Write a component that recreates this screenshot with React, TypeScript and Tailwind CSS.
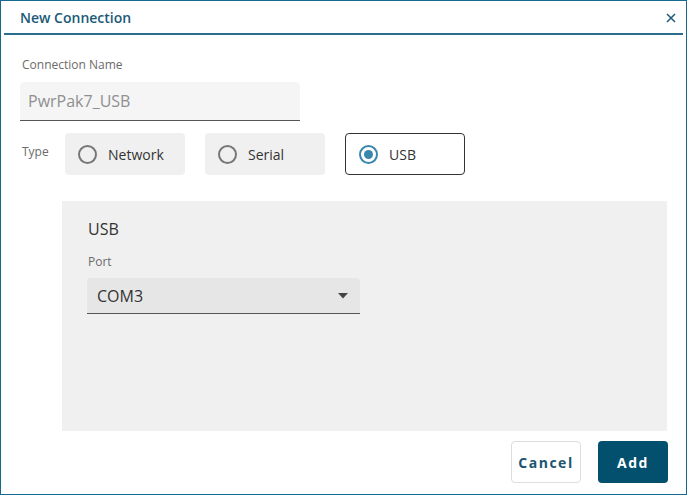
function Radio({ label, checked = false }: { label: string; checked?: boolean }) {
  return (
    <div
      className={[
        "flex h-[42px] w-[120px] items-center rounded-[4px] pl-[13px]",
        checked ? "border border-[#333] bg-white" : "bg-[#f0f0f0]",
      ].join(" ")}
    >
      <span
        className={[
          "flex h-[19px] w-[19px] items-center justify-center rounded-full border-2",
          checked ? "border-[#3a87ad]" : "border-[#777]",
        ].join(" ")}
      >
        {checked && <span className="h-[9px] w-[9px] rounded-full bg-[#3a87ad]" />}
      </span>
      <span className="ml-[11px] text-[14px] text-[#333]">{label}</span>
    </div>
  );
}

export default function App() {
  return (
    <div className="h-[495px] w-[688px] bg-white" style={{ fontFamily: '"Open Sans", sans-serif' }}>
      <div className="flex h-[495px] w-[687px] flex-col border border-[#16698f]">
        {/* header */}
        <div className="mx-[3px] flex h-[34px] items-center justify-between border-b-2 border-[#2a6d8c] pl-[16px] pr-[7px]">
          <h1 className="text-[14px] font-semibold text-[#1a5a78]">New Connection</h1>
          <svg width="10" height="10" viewBox="0 0 10 10" className="mt-[1px]">
            <path d="M1 1L9 9M9 1L1 9" stroke="#1a5a78" strokeWidth="1.5" />
          </svg>
        </div>

        <div className="pl-[21px] pt-[22px]">
          <div className="text-[12px] leading-[16px] text-[#6b6b6b]">Connection Name</div>
          <div className="ml-[-2px] mt-[9px] flex h-[39px] w-[280px] items-center rounded-t-[4px] border-b border-[#555] bg-[#f5f5f5] pl-[8px] text-[16px] text-[#8f8f8f]">
            PwrPak7_USB
          </div>

          <div className="mt-[12px] flex">
            <div className="w-[43px] pt-[10px] text-[12px] text-[#6b6b6b]">Type</div>
            <div className="flex gap-[20px]">
              <Radio label="Network" />
              <Radio label="Serial" />
              <Radio label="USB" checked />
            </div>
          </div>

          <div className="ml-[40px] mt-[26px] h-[230px] w-[605px] bg-[#f0f0f0] pl-[26px] pt-[17px]">
            <div className="text-[16px] leading-[22px] text-[#333]">USB</div>
            <div className="mt-[14px] text-[12px] leading-[16px] text-[#6b6b6b]">Port</div>
            <div className="ml-[-1px] mt-[8px] flex h-[36px] w-[273px] items-center justify-between rounded-t-[4px] border-b border-[#555] bg-[#e6e6e6] pl-[10px] pr-[12px]">
              <span className="text-[16px] text-[#333]">COM3</span>
              <svg width="10" height="6" viewBox="0 0 10 6">
                <path d="M0 0H10L5 5.5Z" fill="#444" />
              </svg>
            </div>
          </div>

          <div className="mt-[10px] flex w-[646px] justify-end gap-[17px]">
            <button className="h-[42px] w-[70px] rounded-[4px] border border-[#ddd] bg-white text-[14px] font-bold tracking-[1.5px] text-[#1d5570]">
              Cancel
            </button>
            <button className="h-[42px] w-[70px] rounded-[4px] bg-[#02506d] text-[14px] font-bold tracking-[1.5px] text-white">
              Add
            </button>
          </div>
        </div>
      </div>
    </div>
  );
}
